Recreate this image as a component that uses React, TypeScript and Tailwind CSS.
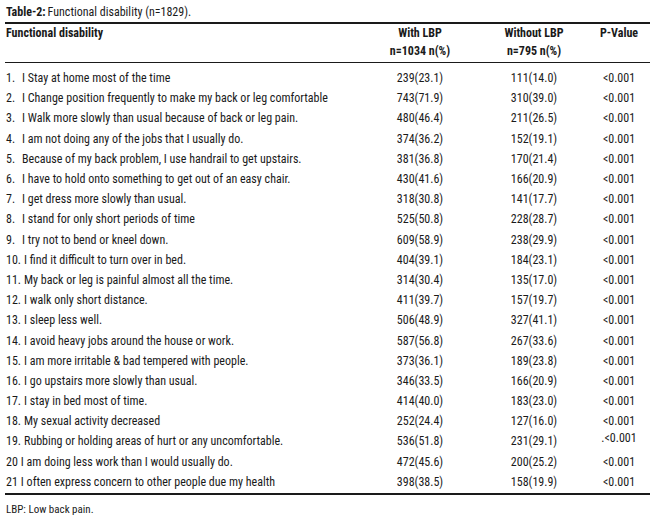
const rows: [string, string, string, string][] = [
  ['1.', 'I Stay at home most of the time', '239(23.1)', '111(14.0)'],
  ['2.', 'I Change position frequently to make my back or leg comfortable', '743(71.9)', '310(39.0)'],
  ['3.', 'I Walk more slowly than usual because of back or leg pain.', '480(46.4)', '211(26.5)'],
  ['4.', 'I am not doing any of the jobs that I usually do.', '374(36.2)', '152(19.1)'],
  ['5.', 'Because of my back problem, I use handrail to get upstairs.', '381(36.8)', '170(21.4)'],
  ['6.', 'I have to hold onto something to get out of an easy chair.', '430(41.6)', '166(20.9)'],
  ['7.', 'I get dress more slowly than usual.', '318(30.8)', '141(17.7)'],
  ['8.', 'I stand for only short periods of time', '525(50.8)', '228(28.7)'],
  ['9.', 'I try not to bend or kneel down.', '609(58.9)', '238(29.9)'],
  ['10.', 'I find it difficult to turn over in bed.', '404(39.1)', '184(23.1)'],
  ['11.', 'My back or leg is painful almost all the time.', '314(30.4)', '135(17.0)'],
  ['12.', 'I walk only short distance.', '411(39.7)', '157(19.7)'],
  ['13.', 'I sleep less well.', '506(48.9)', '327(41.1)'],
  ['14.', 'I avoid heavy jobs around the house or work.', '587(56.8)', '267(33.6)'],
  ['15.', 'I am more irritable & bad tempered with people.', '373(36.1)', '189(23.8)'],
  ['16.', 'I go upstairs more slowly than usual.', '346(33.5)', '166(20.9)'],
  ['17.', 'I stay in bed most of time.', '414(40.0)', '183(23.0)'],
  ['18.', 'My sexual activity decreased', '252(24.4)', '127(16.0)'],
  ['19.', 'Rubbing or holding areas of hurt or any uncomfortable.', '536(51.8)', '231(29.1)'],
  ['20', 'I am doing less work than I would usually do.', '472(45.6)', '200(25.2)'],
  ['21', 'I often express concern to other people due my health', '398(38.5)', '158(19.9)'],
];

export default function App() {
  return (
    <div
      className="w-[650px] h-[521px] bg-white text-[#1a1a1a] text-[12px] leading-none pl-[5px] overflow-hidden"
      style={{ fontFamily: '"Liberation Sans Narrow", "Arial Narrow", "Roboto Condensed", "Liberation Sans", sans-serif' }}
    >
      <div className="h-[22px] flex items-center pl-[1px] pt-[2px]">
        <span className="font-bold">Table-2:</span>
        <span className="ml-[2px]">Functional disability (n=1829).</span>
      </div>

      {/* header */}
      <div className="border-t-2 border-b-[1.5px] border-[#1a1a1a] h-[41px] flex pt-[3px]">
        <div className="w-[365px] pl-[1px] font-bold">Functional disability</div>
        <div className="w-[100px] flex flex-col items-center font-bold gap-[6px]">
          <span className="whitespace-nowrap">With LBP</span>
          <span className="whitespace-nowrap">n=1034 n(%)</span>
        </div>
        <div className="w-[128px] flex flex-col items-center font-bold gap-[6px]">
          <span className="whitespace-nowrap">Without LBP</span>
          <span className="whitespace-nowrap">n=795 n(%)</span>
        </div>
        <div className="w-[42px] flex justify-center font-bold">
          <span className="whitespace-nowrap">P-Value</span>
        </div>
      </div>

      {/* body */}
      <div className="border-b-2 border-[#1a1a1a] pt-[5px] pb-[1px]">
        {rows.map(([num, text, withLbp, withoutLbp], i) => (
          <div key={num} className="h-[20.2px] flex items-center">
            <div className="w-[365px] flex whitespace-nowrap pl-[1px]">
              {num.length < 3 && num.endsWith('.') ? (
                <span className="w-[16px] shrink-0">{num}</span>
              ) : (
                <span className="mr-[3px]">{num}</span>
              )}
              <span>{text}</span>
            </div>
            <div className="w-[100px] flex justify-center whitespace-nowrap">{withLbp}</div>
            <div className="w-[128px] flex justify-center whitespace-nowrap">{withoutLbp}</div>
            <div className={`w-[42px] flex justify-center whitespace-nowrap ${i === 18 ? 'pb-[7px]' : ''}`}>
              {i === 18 ? '.<0.001' : '<0.001'}
            </div>
          </div>
        ))}
      </div>

      <div className="pt-[9px] pl-[1px] text-[11px]">LBP: Low back pain.</div>
    </div>
  );
}
